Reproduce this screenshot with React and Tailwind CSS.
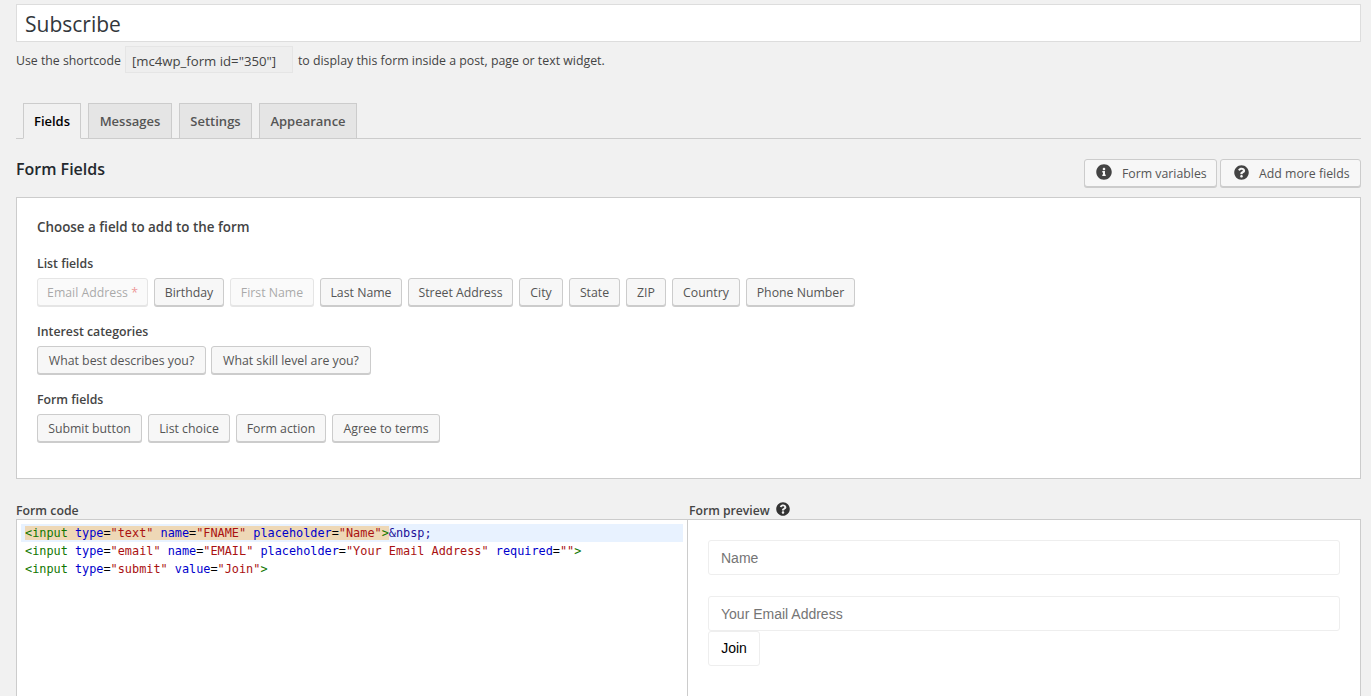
import React from 'react';
import { FaInfoCircle, FaQuestionCircle } from 'react-icons/fa';

const listFields = [
  { label: 'Email Address', width: 'w-[111px]', disabled: true, star: true },
  { label: 'Birthday', width: 'w-[70px]' },
  { label: 'First Name', width: 'w-[84px]', disabled: true },
  { label: 'Last Name', width: 'w-[82px]' },
  { label: 'Street Address', width: 'w-[105px]' },
  { label: 'City', width: 'w-[44px]' },
  { label: 'State', width: 'w-[51px]' },
  { label: 'ZIP', width: 'w-[40px]' },
  { label: 'Country', width: 'w-[68px]' },
  { label: 'Phone Number', width: 'w-[109px]' },
];

const interestFields = [
  { label: 'What best describes you?', width: 'w-[169px]' },
  { label: 'What skill level are you?', width: 'w-[160px]' },
];

const formFields = [
  { label: 'Submit button', width: 'w-[105px]' },
  { label: 'List choice', width: 'w-[82px]' },
  { label: 'Form action', width: 'w-[90px]' },
  { label: 'Agree to terms', width: 'w-[108px]' },
];

const FieldButton = ({ label, width, disabled, star }) => (
  <button
    className={`${width} h-[28px] shrink-0 rounded-[3px] border border-[#cccccc] bg-[#f7f7f7] pt-[2px] text-center text-[12.3px] text-[#555555] shadow-[0_1px_0_#cccccc] ${disabled ? 'opacity-50' : ''}`}
  >
    {label}
    {star && <span className="text-[#dc3232]"> *</span>}
  </button>
);

const FieldGroup = ({ title, fields, gap }) => (
  <div className="mb-[17px]">
    <div className="mb-[5px] h-[18px] text-[12.3px] font-semibold leading-[18px] text-[#444444]">{title}</div>
    <div className={`flex ${gap}`}>
      {fields.map((f) => (
        <FieldButton key={f.label} {...f} />
      ))}
    </div>
  </div>
);

const Tab = ({ label, width, active }) => (
  <div
    className={`${width} flex items-center justify-center border border-[#cccccc] pt-[2px] text-[13px] font-semibold ${
      active ? 'h-[36px] border-b-[#f1f1f1] bg-[#f1f1f1] text-[#000000]' : 'h-[35px] border-b-0 bg-[#e5e5e5] text-[#555555]'
    }`}
  >
    {label}
  </div>
);

const T = ({ children }) => <span className="text-[#117700]">{children}</span>;
const A = ({ children }) => <span className="text-[#0000cc]">{children}</span>;
const S = ({ children }) => <span className="text-[#aa1111]">{children}</span>;

const App = () => {
  return (
    <div className="h-[696px] w-full overflow-hidden bg-[#f1f1f1] px-[16px] pr-[10px] pt-[4px] font-['Open_Sans',sans-serif] text-[#444444]">
      <div className="flex h-[38px] items-center border border-[#dddddd] bg-white px-[8px] pt-[4px] text-[21px] text-[#32373c]">Subscribe</div>

      <div className="mt-[4px] flex h-[27px] items-center text-[12.3px] text-[#444444]">
        <span className="pt-[4px]">Use the shortcode</span>
        <span className="ml-[4px] flex h-[27px] w-[168px] items-center border border-[#e5e5e5] bg-[#eeeeee] pl-[6px] pt-[4px] text-[13.2px] text-[#444444]">[mc4wp_form id="350"]</span>
        <span className="ml-[5px] pt-[4px] text-[12.35px]">to display this form inside a post, page or text widget.</span>
      </div>

      <div className="mt-[30px] flex h-[36px] items-end gap-[7px] border-b border-[#cccccc] pl-[7px]">
        <div className="-mb-px"><Tab label="Fields" width="w-[58px]" active /></div>
        <Tab label="Messages" width="w-[84px]" />
        <Tab label="Settings" width="w-[73px]" />
        <Tab label="Appearance" width="w-[98px]" />
      </div>

      <div className="mt-[20px] flex h-[28px] items-start justify-between">
        <div className="text-[16px] font-semibold leading-[20px] text-[#23282d]">Form Fields</div>
        <div className="flex gap-[3px]">
          <button className="flex h-[28px] w-[133px] items-center rounded-[3px] border border-[#cccccc] bg-[#f7f7f7] pl-[11px] text-[12.3px] text-[#555555] shadow-[0_1px_0_#cccccc]">
            <FaInfoCircle className="mb-[2px] text-[16px] text-[#444444]" />
            <span className="ml-[10px] pt-[2px]">Form variables</span>
          </button>
          <button className="flex h-[28px] w-[141px] items-center rounded-[3px] border border-[#cccccc] bg-[#f7f7f7] pl-[13px] text-[12.3px] text-[#555555] shadow-[0_1px_0_#cccccc]">
            <FaQuestionCircle className="mb-[2px] text-[15px] text-[#444444]" />
            <span className="ml-[10px] pt-[2px]">Add more fields</span>
          </button>
        </div>
      </div>

      <div className="mt-[10px] h-[282px] border border-[#cccccc] bg-white pl-[20px] pt-[19px]">
        <div className="mb-[18px] h-[20px] text-[13.4px] font-semibold leading-[20px] text-[#444444]">Choose a field to add to the form</div>
        <FieldGroup title="List fields" fields={listFields} gap="gap-[6px]" />
        <FieldGroup title="Interest categories" fields={interestFields} gap="gap-[5px]" />
        <FieldGroup title="Form fields" fields={formFields} gap="gap-[6px]" />
      </div>

      <div className="mt-[23px] flex">
        <div className="w-[671px] shrink-0">
          <div className="h-[17px] text-[12.3px] font-semibold leading-[18px] text-[#444444]">Form code</div>
          <div className="h-[300px] border border-r-0 border-[#cccccc] bg-white pl-[4px] pt-[4px] font-['DejaVu_Sans_Mono',monospace] text-[11.85px] leading-[18px] whitespace-pre text-black">
            <div className="h-[18px] w-[662px] bg-[#e8f2ff] pl-[4px]">
              <span className="bg-[#eed8b6]">
                <T>&lt;input</T> <A>type</A>=<S>"text"</S> <A>name</A>=<S>"FNAME"</S> <A>placeholder</A>=<S>"Name"</S><T>&gt;</T>
              </span>
              <span className="text-[#221199]">&amp;nbsp;</span>
            </div>
            <div className="pl-[4px]">
              <T>&lt;input</T> <A>type</A>=<S>"email"</S> <A>name</A>=<S>"EMAIL"</S> <A>placeholder</A>=<S>"Your Email Address"</S> <A>required</A>=<S>""</S><T>&gt;</T>
            </div>
            <div className="pl-[4px]">
              <T>&lt;input</T> <A>type</A>=<S>"submit"</S> <A>value</A>=<S>"Join"</S><T>&gt;</T>
            </div>
          </div>
        </div>

        <div className="min-w-0 flex-1">
          <div className="flex h-[17px] items-center pl-[2px] text-[12.2px] font-semibold leading-[18px] text-[#444444]">
            Form preview
            <FaQuestionCircle className="mb-[3px] ml-[6px] text-[14px] text-[#333333]" />
          </div>
          <div className="h-[300px] w-[674px] border border-[#cccccc] bg-white pl-[20px] pr-[20px] pt-[20px] font-['Liberation_Sans',sans-serif] text-[14px]">
            <div className="flex h-[35px] items-center rounded-[3px] border border-[#eeeeee] pl-[12px] pt-[2px] text-[#757575]">Name</div>
            <div className="mt-[21px] flex h-[35px] items-center rounded-[3px] border border-[#eeeeee] pl-[12px] pt-[2px] text-[#757575]">Your Email Address</div>
            <div className="flex h-[35px] w-[52px] items-center justify-center rounded-[3px] border border-[#eeeeee] text-black">Join</div>
          </div>
        </div>
      </div>
    </div>
  );
};

export default App;
